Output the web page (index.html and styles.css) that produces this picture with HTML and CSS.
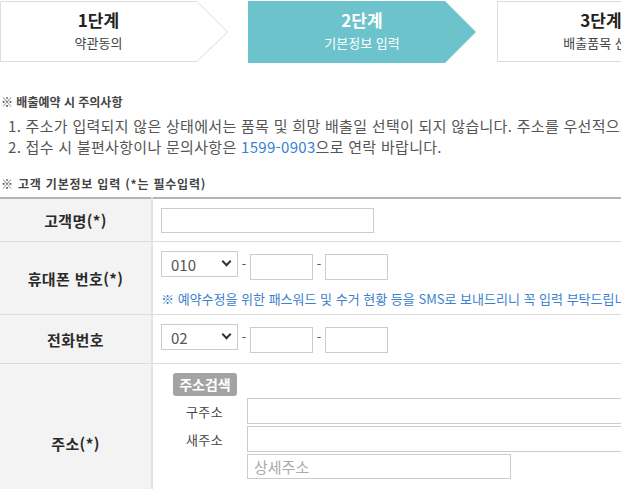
FILE: index.html
```html
<!DOCTYPE html>
<html lang="ko">
<head>
<meta charset="utf-8">
<title>배출예약</title>
<link rel="stylesheet" href="styles.css">
</head>
<body>
<ol class="steps">
  <li class="step step-done">
    <svg class="step-shape" width="229" height="62" viewBox="0 0 229 62"><polygon points="0.5,0.5 197,0.5 227.5,31 197,60.5 0.5,60.5" fill="#fff" stroke="#dcdcdc" stroke-width="1"/></svg>
    <div class="step-text first"><strong>1단계</strong><span>약관동의</span></div>
  </li>
  <li class="step step-active">
    <svg class="step-shape" width="229" height="62" viewBox="0 0 229 62"><polygon points="0,0 197,0 228,31 197,62 0,62" fill="#6cc3cc"/></svg>
    <div class="step-text"><strong>2단계</strong><span>기본정보 입력</span></div>
  </li>
  <li class="step step-next">
    <div class="step-text"><strong>3단계</strong><span>배출품목 선택</span></div>
  </li>
</ol>

<section class="notice">
  <h3 class="sub-title">※ 배출예약 시 주의사항</h3>
  <ol class="notice-list">
    <li>1. 주소가 입력되지 않은 상태에서는 품목 및 희망 배출일 선택이 되지 않습니다. 주소를 우선적으로 입력해 주세요.</li>
    <li>2. 접수 시 불편사항이나 문의사항은 <span class="tel">1599-0903</span>으로 연락 바랍니다.</li>
  </ol>
</section>

<h3 class="sub-title form-title">※ 고객 기본정보 입력 (*는 필수입력)</h3>
<table class="form-table">
  <tr class="row-name">
    <th>고객명(*)</th>
    <td><input class="inp inp-name" type="text"></td>
  </tr>
  <tr class="row-mobile">
    <th>휴대폰 번호(*)</th>
    <td>
      <div class="phone">
        <span class="sel"><select><option>010</option></select></span>
        <span class="dash">-</span>
        <input class="inp inp-num" type="text">
        <span class="dash">-</span>
        <input class="inp inp-num" type="text">
      </div>
      <p class="hint">※ 예약수정을 위한 패스워드 및 수거 현황 등을 SMS로 보내드리니 꼭 입력 부탁드립니다.</p>
    </td>
  </tr>
  <tr class="row-tel">
    <th>전화번호</th>
    <td>
      <div class="phone">
        <span class="sel"><select><option>02</option></select></span>
        <span class="dash">-</span>
        <input class="inp inp-num" type="text">
        <span class="dash">-</span>
        <input class="inp inp-num" type="text">
      </div>
    </td>
  </tr>
  <tr class="row-addr">
    <th>주소(*)</th>
    <td>
      <div class="addr">
        <button class="btn-search" type="button">주소검색</button>
        <span class="addr-spacer"></span>
        <span class="addr-label">구주소</span>
        <input class="inp inp-addr" type="text">
        <span class="addr-label">새주소</span>
        <input class="inp inp-addr" type="text">
        <span class="addr-spacer"></span>
        <input class="inp inp-detail" type="text" placeholder="상세주소">
      </div>
    </td>
  </tr>
</table>
</body>
</html>
```
FILE: styles.css
```css
html, body {
  margin: 0;
  padding: 0;
  overflow: hidden;
  background: #fff;
}
body {
  font-family: "Noto Sans CJK KR", "Noto Sans", sans-serif;
  color: #333;
  width: 621px;
}

/* steps */
.steps {
  list-style: none;
  margin: 1px 0 0 0;
  padding: 0;
  display: flex;
  height: 61px;
  white-space: nowrap;
}
.step {
  position: relative;
  flex: 0 0 228px;
  height: 61px;
}
.step-done { margin-right: 20px; }
.step-active { margin-right: 21px; }
.step-next {
  flex: 0 0 240px;
  box-sizing: border-box;
  border: 1px solid #dcdcdc;
  background: #fff;
}
.step-shape {
  position: absolute;
  left: 0;
  top: 0;
}
.step-text {
  position: relative;
  display: flex;
  flex-direction: column;
  align-items: center;
  width: 228px;
  padding-top: 7px;
}
.step-text.first { width: 197px; }
.step-next .step-text { margin-left: -11px; padding-top: 6px; }
.step-text strong {
  font-size: 17px;
  line-height: 24px;
  font-weight: 700;
  color: #222;
}
.step-text span {
  font-size: 13px;
  line-height: 20px;
  color: #444;
  margin-top: 1px;
}
.step-active .step-text strong,
.step-active .step-text span { color: #fff; }

/* notice */
.sub-title {
  margin: 0;
  font-size: 12px;
  line-height: 16px;
  font-weight: 700;
  color: #444;
  padding-left: 1px;
}
.notice { margin-top: 32px; }
.notice-list {
  list-style: none;
  margin: 5px 0 0 0;
  padding: 0 0 0 8px;
  font-size: 15px;
  letter-spacing: 0.3px;
  line-height: 21px;
  color: #555;
  white-space: nowrap;
}
.tel { color: #3b7fcf; }
.form-title { margin-top: 19px; letter-spacing: 0.8px; }

/* table */
.form-table {
  margin-top: 5px;
  width: 700px;
  border-collapse: collapse;
  border-top: 2px solid #b5b5b5;
}
.form-table th {
  width: 151px;
  padding: 0;
  background: #f3f3f3;
  border-right: 2px solid #e2e2e2;
  border-bottom: 1px solid #dcdcdc;
  font-size: 15px;
  letter-spacing: 0.4px;
  font-weight: 700;
  color: #2a2a2a;
  text-align: center;
  vertical-align: middle;
}
.form-table td {
  padding: 9px 0 0 8px;
  border-bottom: 1px solid #dcdcdc;
  vertical-align: top;
}
.row-name td { height: 33px; }
.row-mobile td { height: 63px; }
.row-tel td { height: 39px; }
.row-addr td { height: 150px; }

.inp {
  box-sizing: border-box;
  height: 26px;
  border: 1px solid #cccccc;
  background: #fff;
  margin: 0;
  padding: 0 6px;
  font-family: inherit;
  font-size: 14px;
  color: #555;
  outline: none;
}
.inp-name { width: 213px; height: 25px; display: block; }
.inp-num { width: 63px; margin-top: 3px; }
.phone {
  display: flex;
  align-items: flex-start;
  height: 29px;
}
.sel {
  position: relative;
  display: block;
  width: 77px;
  height: 26px;
}
.sel select {
  appearance: none;
  -webkit-appearance: none;
  box-sizing: border-box;
  width: 77px;
  height: 26px;
  border: 1px solid #cccccc;
  background: #fff;
  padding: 0 0 0 9px;
  margin: 0;
  font-family: inherit;
  font-size: 15px;
  color: #555;
  border-radius: 0;
}
.sel::after {
  content: "";
  position: absolute;
  right: 8px;
  top: 7px;
  width: 5px;
  height: 5px;
  border-right: 2px solid #333;
  border-bottom: 2px solid #333;
  transform: rotate(45deg);
  pointer-events: none;
}
.dash {
  width: 12px;
  text-align: center;
  font-size: 13px;
  line-height: 26px;
  color: #555;
}
.hint {
  margin: 10px 0 0 0;
  font-size: 13px;
  line-height: 18px;
  color: #3b7fcf;
  white-space: nowrap;
}

/* address */
.addr {
  display: grid;
  grid-template-columns: 86px auto;
  justify-items: start;
  align-items: center;
  row-gap: 2px;
}
.btn-search {
  justify-self: center;
  margin: 0 0 0 2px;
  height: 23px;
  padding: 0 6px;
  border: 0;
  border-radius: 3px;
  background: #a3a3a3;
  color: #fff;
  font-family: inherit;
  font-size: 14px;
  font-weight: 700;
  line-height: 23px;
}
.addr-label {
  justify-self: center;
  font-size: 13px;
  letter-spacing: 0.3px;
  color: #444;
  margin-left: 1px;
}
.inp-addr { width: 420px; }
.inp-detail { width: 264px; height: 25px; }
.inp-detail::placeholder { color: #aaa; font-size: 15px; }
```
